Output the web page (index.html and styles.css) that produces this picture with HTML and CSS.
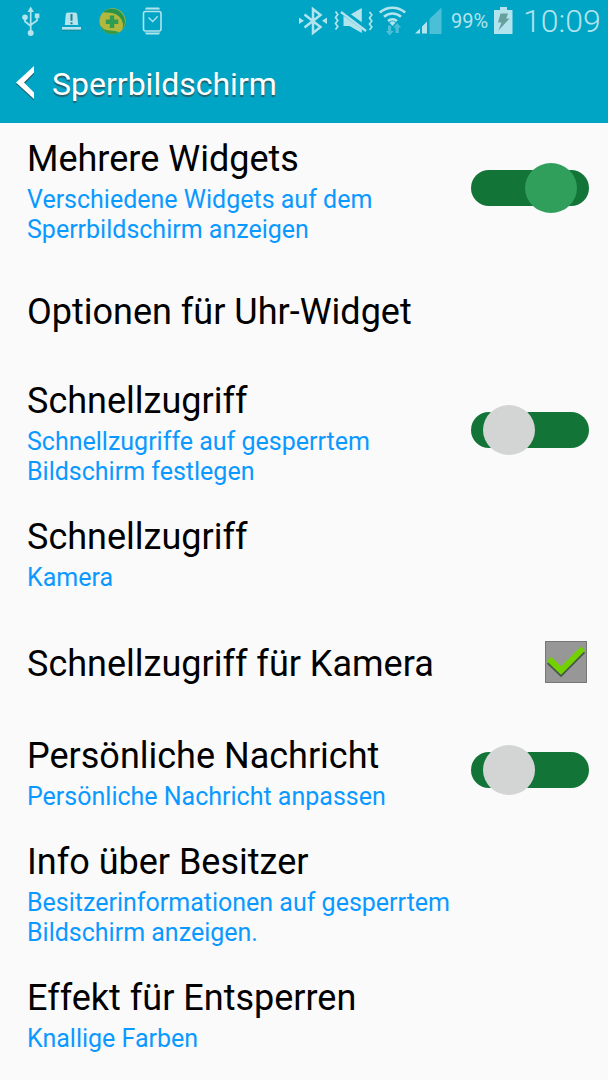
FILE: index.html
```html
<!DOCTYPE html>
<html lang="de">
<head>
    <meta charset="UTF-8">
    <meta name="viewport" content="width=device-width, initial-scale=1.0">
    <title>Sperrbildschirm</title>
    <link rel="stylesheet" href="styles.css">
</head>
<body>
    <header class="header">
        <!-- Status bar -->
        <div class="status-bar">
            <svg class="status-left" width="180" height="45" viewBox="0 0 180 45">
                <!-- USB -->
                <g fill="none" stroke="#b3e3ec" stroke-width="1.7">
                    <path d="M30.7 10v23M25 18v3.5l5.7 4.5M37 17v3.5l-6.3 4.5"/>
                </g>
                <g fill="#b3e3ec">
                    <path d="M30.7 6.5l3.2 5.5h-6.4z"/>
                    <circle cx="25" cy="17.3" r="2.8"/>
                    <path d="M34.8 13.5h4.6v4.6h-4.6z"/>
                    <circle cx="30.7" cy="33" r="3"/>
                    <!-- Alert -->
                    <path d="M64.8 25l1-10.5q.2-2 2.2-2h7q2 0 2.2 2l1 10.5z"/>
                    <path d="M62 27h19v2.8H62z"/>
                    <path d="M146 7.5h13l1 2h-15zM146 34.5h13l1-2h-15z"/>
                </g>
                <path d="M62 30.2h19" stroke="#247f91" stroke-width=".8"/>
                <path d="M71.5 14v6.7M71.5 22.3v2" stroke="#24808e" stroke-width="2"/>
                <!-- Battery care -->
                <circle cx="112.5" cy="21.2" r="13" fill="#b2b83d"/>
                <path d="M103 12.3a13 13 0 0 1 19.5 17q1.500-6-1.500-10.500-4-5.500-11-6-4-.3-7-.5z" fill="#27944a"/>
                <path d="M100 25q3 5 9.500 5.600 6 .4 10 1.600a13 13 0 0 1-19.500-7.200z" fill="#319b4c"/>
                <path d="M112 15.500v12.500M105.800 21.700h12.500" stroke="#319b50" stroke-width="4.500"/>
                <!-- Watch -->
                <rect x="143.500" y="11.500" width="17.500" height="19.500" rx="2" fill="none" stroke="#b3e3ec" stroke-width="1.600"/>
                <path d="M148.500 17.500l4.200 4 5-5.300" fill="none" stroke="#b3e3ec" stroke-width="1.300"/>
            </svg>
            <svg class="status-right" width="155" height="45" viewBox="295 0 155 45">
                <!-- Bluetooth -->
                <path d="M304.500 14.500l16 12.500-7.500 6V9l7.500 6-16 12.500" fill="none" stroke="#b3e3ec" stroke-width="2.500"/>
                <path d="M299 17.500l5 3.300-5 3.300zM327 17.500l-5 3.300 5 3.300z" fill="#b3e3ec"/>
                <!-- Vibrate -->
                <path d="M343.500 15h6l12.300-7v25l-12.300-7h-6z" fill="#b3e3ec"/>
                <path d="M341 10.500l26 19" stroke="#00a5c6" stroke-width="5.500"/>
                <path d="M341 12l25 19" stroke="#b3e3ec" stroke-width="2.300"/>
                <path d="M335.500 11.500l2.300 3-2.300 3 2.300 3-2.300 3 2.300 3-2.300 3M369.500 12l2.300 3-2.300 3 2.300 3-2.300 3 2.300 3-2.300 3" fill="none" stroke="#b3e3ec" stroke-width="1.700"/>
                <!-- WLAN -->
                <path d="M379.800 12.500a19 19 0 0 1 25.400 0M384 16.800a12.700 12.700 0 0 1 17 0M388 21a7 7 0 0 1 9 0" fill="none" stroke="#b3e3ec" stroke-width="2.500"/>
                <path d="M389.500 22.700a4.500 4.500 0 0 1 6 0l-3 3.300z" fill="#b3e3ec"/>
                <path d="M388 25.500h3.200v5.500h2.500l-4 4.500-4-4.500h2.300zM395.500 33h3.300v-5.500h2.400l-4-4.500-4 4.500h2.300z" fill="#4bbfd6"/>
                <!-- Signal -->
                <path d="M415 33.500l5-5v5zM422 33.500v-7l5-5v12z" fill="#b3e3ec"/>
                <path d="M429.500 34V19l12-11.500V34z" fill="#4bbfd6"/>
            </svg>
            <span class="battery-text">99%</span>
            <svg class="battery" width="20" height="28" viewBox="0 0 20 28">
                <path d="M0 3h6V0h7v3h5.500v24H0z" fill="#b3e3ec"/>
                <path d="M6.500 6.500h7.500l-1.800 5h3.300L4.500 23.500l3-8H4z" fill="#669f9b"/>
            </svg>
            <span class="clock">10:09</span>
        </div>
        <!-- Title bar -->
        <div class="title-bar">
            <svg class="back" width="24" height="38" viewBox="0 0 24 38">
                <path d="M19 2.500v6.500l-9.500 10 9.500 10v6.500L1 19z" fill="#27606b"/>
                <path d="M19 1v6.500L9 17.500l10 10V34L1 17.500z" fill="#fff"/>
            </svg>
            <h1>Sperrbildschirm</h1>
        </div>
    </header>

    <main class="settings">
        <div class="row tall">
            <div class="label">
                <h2>Mehrere Widgets</h2>
                <p>Verschiedene Widgets auf dem<br>Sperrbildschirm anzeigen</p>
            </div>
            <div class="toggle on"><div class="knob"></div></div>
        </div>
        <div class="row">
            <div class="label">
                <h2>Optionen für Uhr-Widget</h2>
            </div>
        </div>
        <div class="row tall">
            <div class="label">
                <h2>Schnellzugriff</h2>
                <p>Schnellzugriffe auf gesperrtem<br>Bildschirm festlegen</p>
            </div>
            <div class="toggle"><div class="knob"></div></div>
        </div>
        <div class="row">
            <div class="label">
                <h2>Schnellzugriff</h2>
                <p>Kamera</p>
            </div>
        </div>
        <div class="row check-row">
            <div class="label">
                <h2>Schnellzugriff für Kamera</h2>
            </div>
            <div class="checkbox">
                <svg width="42" height="42" viewBox="0 0 42 42">
                    <path d="M4 20.500L16 32 38 10" fill="none" stroke="#47594a" stroke-width="6"/>
                    <path d="M4 18L16 29.500 38 7.500" fill="none" stroke="#73d100" stroke-width="6"/>
                </svg>
            </div>
        </div>
        <div class="row">
            <div class="label">
                <h2>Persönliche Nachricht</h2>
                <p>Persönliche Nachricht anpassen</p>
            </div>
            <div class="toggle"><div class="knob"></div></div>
        </div>
        <div class="row tall">
            <div class="label">
                <h2>Info über Besitzer</h2>
                <p>Besitzerinformationen auf gesperrtem<br>Bildschirm anzeigen.</p>
            </div>
        </div>
        <div class="row">
            <div class="label">
                <h2>Effekt für Entsperren</h2>
                <p>Knallige Farben</p>
            </div>
        </div>
    </main>
</body>
</html>
```
FILE: styles.css
```css
* {
    box-sizing: border-box;
}

body {
    margin: 0;
    height: 1080px;
    overflow: hidden;
    background-color: #fafafa;
    font-family: Roboto, sans-serif;
}

h1, h2, p {
    margin: 0;
    font-weight: 400;
    white-space: nowrap;
}

svg {
    display: block;
    flex: none;
}

.header {
    height: 123px;
    background-color: #00a5c6;
}

.status-bar {
    display: flex;
    height: 45px;
    color: #b3e3ec;
}

.status-right {
    margin-left: 115px;
}

.battery-text {
    width: 44px;
    padding-left: 1px;
    font-size: 20px;
    line-height: 43px;
}

.battery {
    margin-top: 7px;
}

.clock {
    margin-left: 9px;
    font-size: 32px;
    font-weight: 300;
    line-height: 42px;
}

.title-bar {
    display: flex;
    height: 78px;
    padding: 20px 0 0 15px;
}

.title-bar h1 {
    margin-left: 13px;
    color: #fff;
    font-size: 32px;
    line-height: 38px;
    text-shadow: 0 2px 1px #27606b;
}

.row {
    display: flex;
    justify-content: space-between;
    align-items: center;
    height: 106px;
    padding: 0 19px 0 27px;
}

.tall {
    height: 136px;
}

.check-row {
    height: 113px;
    padding-right: 21px;
}

.label h2 {
    color: #000;
    font-size: 36px;
    line-height: 42px;
}

.label p {
    margin-top: 5px;
    color: #0a99ff;
    font-size: 25px;
    line-height: 30px;
}

.toggle {
    display: flex;
    align-items: center;
    width: 118px;
    height: 36px;
    margin-bottom: 6px;
    padding-left: 12px;
    border-radius: 18px;
    background-color: #127537;
}

.knob {
    flex: none;
    width: 52px;
    height: 50px;
    border-radius: 50%;
    background-color: #d3d5d4;
}

.toggle.on {
    padding-left: 54px;
}

.toggle.on .knob {
    background-color: #309f5b;
}

.checkbox {
    width: 42px;
    height: 42px;
    margin-bottom: 4px;
    background-color: #979797;
    box-shadow: inset 0 0 0 1px #777;
}
```
